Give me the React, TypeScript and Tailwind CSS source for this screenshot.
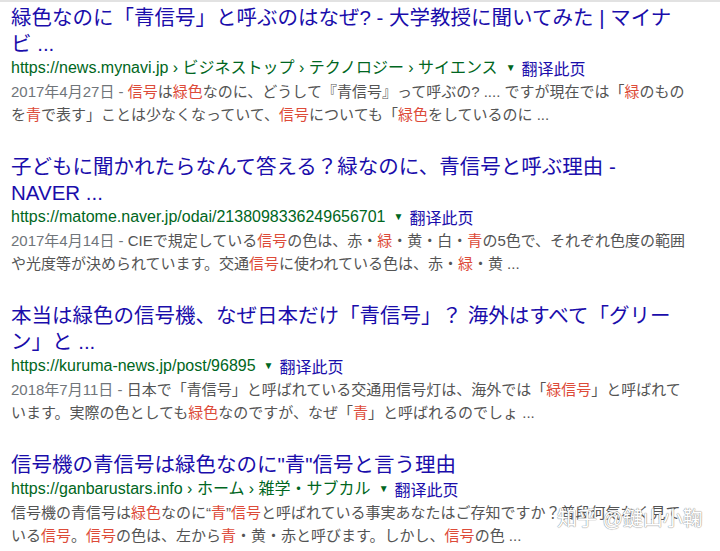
import React from "react";

type Seg = string | { hl: string };

type Result = {
    title: string[];
    url: string;
    date?: string;
    snippet: Seg[][];
};

const results: Result[] = [
    {
        title: ["緑色なのに「青信号」と呼ぶのはなぜ? - 大学教授に聞いてみた | マイナ", "ビ ..."],
        url: "https://news.mynavi.jp › ビジネストップ › テクノロジー › サイエンス",
        date: "2017年4月27日 - ",
        snippet: [
            [{ hl: "信号" }, "は", { hl: "緑色" }, "なのに、どうして『青信号』って呼ぶの? .... ですが現在では「", { hl: "緑" }, "のもの"],
            ["を", { hl: "青" }, "で表す」ことは少なくなっていて、", { hl: "信号" }, "についても「", { hl: "緑色" }, "をしているのに ..."],
        ],
    },
    {
        title: ["子どもに聞かれたらなんて答える？緑なのに、青信号と呼ぶ理由 -", "NAVER ..."],
        url: "https://matome.naver.jp/odai/2138098336249656701",
        date: "2017年4月14日 - ",
        snippet: [
            ["CIEで規定している", { hl: "信号" }, "の色は、赤・", { hl: "緑" }, "・黄・白・", { hl: "青" }, "の5色で、それぞれ色度の範囲"],
            ["や光度等が決められています。交通", { hl: "信号" }, "に使われている色は、赤・", { hl: "緑" }, "・黄 ..."],
        ],
    },
    {
        title: ["本当は緑色の信号機、なぜ日本だけ「青信号」？ 海外はすべて「グリー", "ン」と ..."],
        url: "https://kuruma-news.jp/post/96895",
        date: "2018年7月11日 - ",
        snippet: [
            ["日本で「青信号」と呼ばれている交通用信号灯は、海外では「", { hl: "緑信号" }, "」と呼ばれて"],
            ["います。実際の色としても", { hl: "緑色" }, "なのですが、なぜ「", { hl: "青" }, "」と呼ばれるのでしょ ..."],
        ],
    },
    {
        title: ["信号機の青信号は緑色なのに\"青\"信号と言う理由"],
        url: "https://ganbarustars.info › ホーム › 雑学・サブカル",
        snippet: [
            ["信号機の青信号は", { hl: "緑色" }, "なのに“", { hl: "青" }, "”", { hl: "信号" }, "と呼ばれている事実あなたはご存知ですか？普段何気なく見て"],
            ["いる", { hl: "信号" }, "。", { hl: "信号" }, "の色は、左から", { hl: "青" }, "・黄・赤と呼びます。しかし、", { hl: "信号" }, "の色 ..."],
        ],
    },
];

function Line({ segs }: { segs: Seg[] }) {
    return (
        <>
            {segs.map((s, i) =>
                typeof s === "string" ? (
                    <span key={i}>{s}</span>
                ) : (
                    <span key={i} className="text-[#dd4b39]">
                        {s.hl}
                    </span>
                )
            )}
        </>
    );
}

export default function App() {
    return (
        <div
            className="relative w-[720px] h-[551px] overflow-hidden bg-white"
            style={{ fontFamily: '"Liberation Sans", "Noto Sans CJK JP", sans-serif' }}
        >
            <div className="h-[2px] bg-[#e2e2e2]" />
            <div className="pl-[11px] pt-[3px]">
                {results.map((r, i) => (
                    <div key={i} className="mb-[28px] last:mb-0">
                        {/* title */}
                        <div className="text-[20.5px] leading-[26px] text-[#1a0dab] whitespace-nowrap">
                            {r.title.map((t, j) => (
                                <div key={j}>{t}</div>
                            ))}
                        </div>

                        {/* url */}
                        <div className="mt-[1px] flex items-center text-[16px] leading-[20px] whitespace-nowrap">
                            <span className="text-[#006621]">{r.url}</span>
                            <span className="ml-[8px] mr-[6px] text-[10px] text-[#006621]">▼</span>
                            <span
                                className="text-[16px] text-[#1a0dab]"
                                style={{ fontFamily: '"Noto Sans CJK SC", sans-serif' }}
                            >
                                翻译此页
                            </span>
                        </div>

                        {/* snippet */}
                        <div className="mt-[2px] text-[15px] leading-[23px] text-[#545454] whitespace-nowrap">
                            {r.snippet.map((line, j) => (
                                <div key={j}>
                                    {j === 0 && r.date && <span className="text-[#70757a]">{r.date}</span>}
                                    <Line segs={line} />
                                </div>
                            ))}
                        </div>
                    </div>
                ))}
            </div>

            {/* watermark */}
            <div className="absolute left-[557px] top-[506px] text-[20px] leading-[26px] text-white whitespace-nowrap [text-shadow:0_0_1px_#8a8a8a,0_0_1px_#8a8a8a]">
                知乎 @鍵山小鞠
            </div>
        </div>
    );
}
